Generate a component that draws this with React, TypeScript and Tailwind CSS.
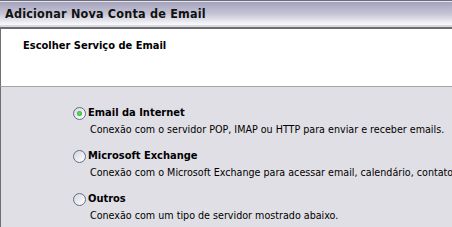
import React from "react";

const font = { fontFamily: '"DejaVu Sans Condensed", "DejaVu Sans", sans-serif' };

function Radio({ checked }: { checked?: boolean }) {
  return (
    <span className="relative flex h-[13px] w-[13px] shrink-0 items-center justify-center rounded-full border border-[#5c6f8a] bg-[linear-gradient(135deg,#d6d6dc,#ffffff)]">
      {checked && (
        <span className="h-[5px] w-[5px] rounded-full bg-[radial-gradient(circle,#6fdc6f,#21a121)]" />
      )}
    </span>
  );
}

function Option({
  label,
  desc,
  checked,
}: {
  label: string;
  desc: string;
  checked?: boolean;
}) {
  return (
    <div className="flex flex-col">
      <div className="flex h-[14px] items-center gap-[2px]">
        <Radio checked={checked} />
        <span className="text-[11px] font-bold leading-[14px] text-black">{label}</span>
      </div>
      <div className="mt-[3px] whitespace-nowrap pl-[17px] text-[10.65px] leading-[13px] text-black">
        {desc}
      </div>
    </div>
  );
}

export default function App() {
  return (
    <div className="h-[227px] w-[452px] overflow-hidden bg-white" style={font}>
      <div className="flex h-[29px] flex-col">
        <div className="h-[1px] bg-[#6c6c7c]" />
        <div className="h-[1px] bg-[#e6e6ee]" />
        <div className="flex h-[23px] items-center bg-[linear-gradient(to_bottom,#a5a3bc,#c4c3d4_50%,#fbfbfd)] pl-[5px] pt-[2px]">
          <span className="whitespace-nowrap text-[12.5px] font-bold tracking-[0.2px] text-[#111]">
            Adicionar Nova Conta de Email
          </span>
        </div>
        <div className="h-[2px] bg-[#d8d8de]" />
        <div className="h-[2px] bg-[#6c6c74]" />
      </div>
      <div className="flex h-[58px] border-b border-l border-b-[#a4a4a4] border-l-[#707070] pl-[22px] pt-[10px]">
        <span className="text-[11px] font-bold leading-[14px] text-black">Escolher Serviço de Email</span>
      </div>
      <div className="flex h-[140px] flex-col gap-[13px] border-l border-l-[#707070] bg-[#e0dfe5] pl-[72px] pt-[19px]">
        <Option
          checked
          label="Email da Internet"
          desc="Conexão com o servidor POP, IMAP ou HTTP para enviar e receber emails."
        />
        <Option
          label="Microsoft Exchange"
          desc="Conexão com o Microsoft Exchange para acessar email, calendário, contatos"
        />
        <Option label="Outros" desc="Conexão com um tipo de servidor mostrado abaixo." />
        <div className="-mt-[7px] ml-[16px] h-[4px] w-[332px] border-t border-t-[#f4f4f6] bg-[#d3d3da]" />
      </div>
    </div>
  );
}
